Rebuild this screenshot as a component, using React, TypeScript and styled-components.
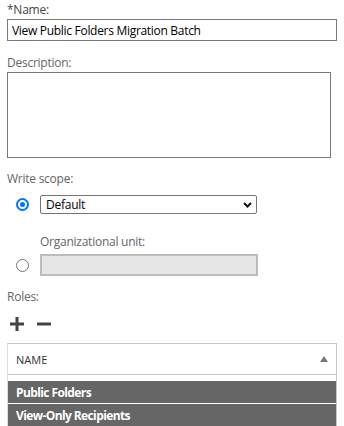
import { ReactNode } from 'react'
import styled, { createGlobalStyle } from 'styled-components'

const GlobalStyle = createGlobalStyle`
	html, body {
		margin: 0;
		padding: 0;
		background: #fff;
	}
	body {
		font-family: 'Open Sans', 'Noto Sans', sans-serif;
		font-size: 12px;
		letter-spacing: -0.25px;
		color: #333;
	}
`

const Page = styled.div`
	width: 344px;
	height: 426px;
	overflow: hidden;
	padding: 0 0 0 7px;
	box-sizing: border-box;
`

const Label = styled.div<{ $dark?: boolean }>`
	font-size: 12px;
	line-height: 16px;
	color: ${(p) => (p.$dark ? '#444' : '#666')};
	height: 17px;
`

const TextBox = styled.input`
	display: block;
	box-sizing: border-box;
	width: 330px;
	height: 22px;
	margin: 0;
	padding: 0 4px;
	border: 1px solid #7a7a7a;
	font-family: inherit;
	font-size: 12px;
	letter-spacing: -0.3px;
	color: #000;
	outline: none;
`

const TextArea = styled.textarea`
	display: block;
	box-sizing: border-box;
	width: 324px;
	height: 86px;
	margin: 0;
	border: 1px solid #7a7a7a;
	resize: none;
	outline: none;
	font-family: inherit;
`

const Section = styled.div<{ $top: number }>`
	margin-top: ${(p) => p.$top}px;
`

const RadioRow = styled.div`
	display: flex;
	align-items: center;
	margin-left: 9px;
	gap: 11px;
`

const RadioCircle = styled.span<{ $on?: boolean }>`
	width: 13px;
	height: 13px;
	box-sizing: border-box;
	border-radius: 50%;
	border: ${(p) => (p.$on ? '2px solid #0075ff' : '1px solid #767676')};
	display: flex;
	align-items: center;
	justify-content: center;
	flex: none;
	&::after {
		content: '';
		display: ${(p) => (p.$on ? 'block' : 'none')};
		width: 5px;
		height: 5px;
		border-radius: 50%;
		background: #0075ff;
	}
`

const Select = styled.div`
	box-sizing: border-box;
	width: 217px;
	height: 19px;
	border: 1px solid #767676;
	border-radius: 2px;
	display: flex;
	align-items: center;
	justify-content: space-between;
	padding: 0 4px 0 5px;
	color: #000;
	font-size: 12px;
`

const SubLabel = styled(Label)`
	margin-left: 33px;
`

const DisabledBox = styled.div`
	box-sizing: border-box;
	width: 218px;
	height: 22px;
	background: #e6e6e6;
	border: 2px solid #bcbcbc;
`

const Toolbar = styled.div`
	display: flex;
	gap: 11px;
	margin-left: 2px;
	height: 16px;
	align-items: center;
`

const Grid = styled.div`
	width: 330px;
	box-sizing: border-box;
	border: 1px solid #c8c8c8;
	border-bottom: none;
	border-left-color: #e0e0e0;
`

const Head = styled.div`
	height: 30px;
	display: flex;
	align-items: center;
	justify-content: space-between;
	padding: 0 8px 0 8px;
	border-bottom: 1px solid #c8c8c8;
	font-size: 11px;
	letter-spacing: 0;
	color: #333;
`

const Body = styled.div`
	padding-top: 6px;
	display: flex;
	flex-direction: column;
	gap: 1px;
`

const Row = styled.div`
	background: #666;
	color: #fff;
	font-weight: 700;
	font-size: 12px;
	height: 22px;
	display: flex;
	align-items: center;
	padding-left: 8px;
	letter-spacing: -0.6px;
`

const Field = ({ label, dark, children }: { label: ReactNode; dark?: boolean; children: ReactNode }) => (
	<div>
		<Label $dark={dark}>{label}</Label>
		{children}
	</div>
)

export default function App() {
	return (
		<>
			<GlobalStyle />
			<Page>
				<Section $top={2}>
					<Field label='*Name:' dark>
						<TextBox readOnly value='View Public Folders Migration Batch' />
					</Field>
				</Section>
				<Section $top={14}>
					<Field label='Description:'>
						<TextArea readOnly />
					</Field>
				</Section>
				<Section $top={13}>
					<Label>Write scope:</Label>
				</Section>
				<Section $top={7}>
					<RadioRow>
						<RadioCircle $on />
						<Select>
							<span>Default</span>
							<svg width='9' height='6' viewBox='0 0 9 6'>
								<path d='M1 1 L4.5 4.5 L8 1' fill='none' stroke='#111' strokeWidth='2' />
							</svg>
						</Select>
					</RadioRow>
				</Section>
				<Section $top={20}>
					<SubLabel>Organizational unit:</SubLabel>
				</Section>
				<Section $top={3}>
					<RadioRow>
						<RadioCircle />
						<DisabledBox />
					</RadioRow>
				</Section>
				<Section $top={13}>
					<Label>Roles:</Label>
				</Section>
				<Section $top={10}>
					<Toolbar>
						<svg width='16' height='16' viewBox='0 0 16 16'>
							<path d='M8 1 V15 M1 8 H15' stroke='#444' strokeWidth='3' />
						</svg>
						<svg width='16' height='16' viewBox='0 0 16 16'>
							<path d='M1 8 H15' stroke='#444' strokeWidth='3' />
						</svg>
					</Toolbar>
				</Section>
				<Section $top={11}>
					<Grid>
						<Head>
							<span>NAME</span>
							<svg width='8' height='6' viewBox='0 0 8 6'>
								<path d='M0 6 L4 0 L8 6 Z' fill='#777' />
							</svg>
						</Head>
						<Body>
							<Row>Public Folders</Row>
							<Row>View-Only Recipients</Row>
						</Body>
					</Grid>
				</Section>
			</Page>
		</>
	)
}
